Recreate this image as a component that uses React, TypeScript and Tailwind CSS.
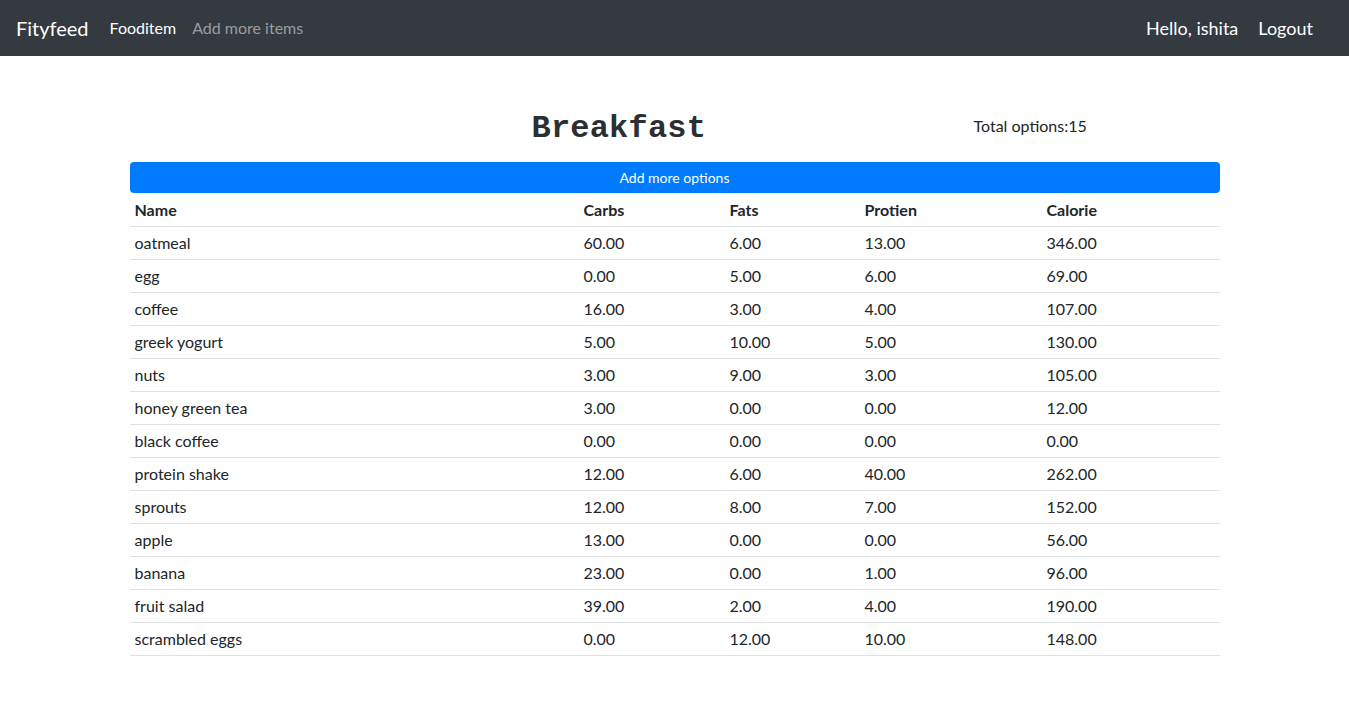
import React from "react";

const rows: [string, string, string, string, string][] = [
  ["oatmeal", "60.00", "6.00", "13.00", "346.00"],
  ["egg", "0.00", "5.00", "6.00", "69.00"],
  ["coffee", "16.00", "3.00", "4.00", "107.00"],
  ["greek yogurt", "5.00", "10.00", "5.00", "130.00"],
  ["nuts", "3.00", "9.00", "3.00", "105.00"],
  ["honey green tea", "3.00", "0.00", "0.00", "12.00"],
  ["black coffee", "0.00", "0.00", "0.00", "0.00"],
  ["protein shake", "12.00", "6.00", "40.00", "262.00"],
  ["sprouts", "12.00", "8.00", "7.00", "152.00"],
  ["apple", "13.00", "0.00", "0.00", "56.00"],
  ["banana", "23.00", "0.00", "1.00", "96.00"],
  ["fruit salad", "39.00", "2.00", "4.00", "190.00"],
  ["scrambled eggs", "0.00", "12.00", "10.00", "148.00"],
];

export default function App() {
  return (
    <div className="min-h-[705px] bg-white text-[#212529] font-['Lato','Noto_Sans',sans-serif]">
      <nav className="h-[56px] bg-[#343a40] flex items-center px-4">
        <span className="text-[20px] text-white mr-[21px]">Fityfeed</span>
        <span className="text-[16px] text-white mr-[16px]">Fooditem</span>
        <span className="text-[16px] text-[#9a9da0]">Add more items</span>
        <div className="ml-auto flex items-center gap-[20px] pr-[20px] text-[18px] text-white">
          <span>Hello, ishita</span>
          <span>Logout</span>
        </div>
      </nav>
      <main className="w-[1090px] mx-auto pt-[54px]">
        <div className="flex items-start h-[52px]">
          <div className="w-[402px]" />
          <h1 className="w-[300px] text-[32px] font-bold leading-[38px] font-['Liberation_Mono',monospace] text-[#2b2f33] tracking-[0.2px]">
            Breakfast
          </h1>
          <div className="text-[16px] leading-[24px] pt-[4px] ml-[142px]">Total options:15</div>
        </div>
        <button className="w-full h-[31px] bg-[#007bff] text-white text-[14px] rounded-[4px] flex items-center justify-center">
          Add more options
        </button>
        <table className="w-full border-collapse text-[16px] table-fixed">
          <colgroup>
            <col className="w-[449px]" />
            <col className="w-[146px]" />
            <col className="w-[135px]" />
            <col className="w-[182px]" />
            <col className="w-[178px]" />
          </colgroup>
          <thead>
            <tr className="border-b border-[#dee2e6]">
              {["Name", "Carbs", "Fats", "Protien", "Calorie"].map((h) => (
                <th key={h} className="text-left font-bold px-[5px] pt-[5px] pb-[4px] leading-6">
                  {h}
                </th>
              ))}
            </tr>
          </thead>
          <tbody>
            {rows.map((r) => (
              <tr key={r[0]} className="border-b border-[#dee2e6]">
                {r.map((c, i) => (
                  <td key={i} className="px-[5px] py-[4px] leading-6">
                    {c}
                  </td>
                ))}
              </tr>
            ))}
          </tbody>
        </table>
      </main>
    </div>
  );
}
